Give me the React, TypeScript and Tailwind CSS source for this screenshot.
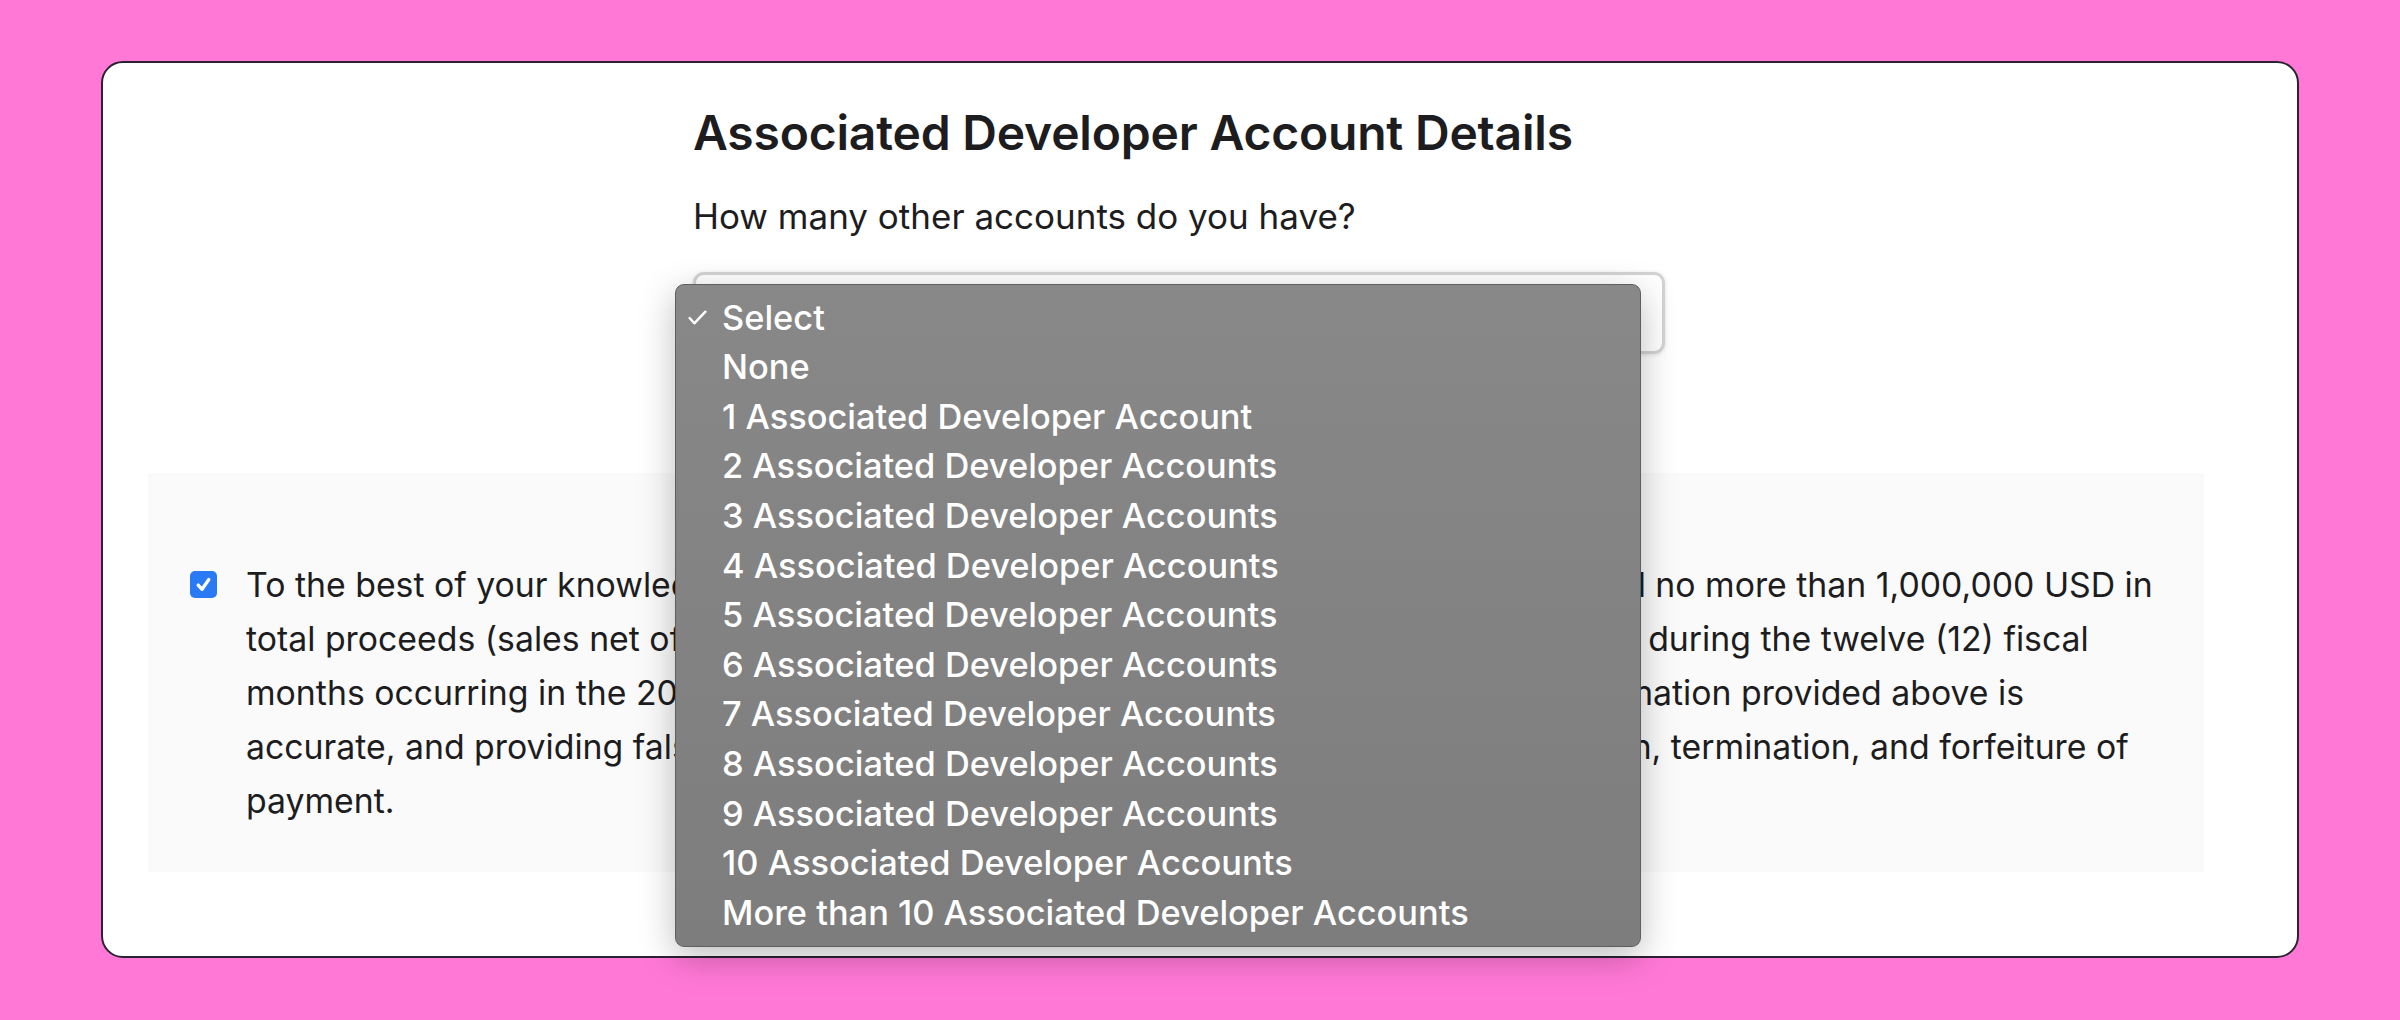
import React from 'react';

const options = [
  'Select',
  'None',
  '1 Associated Developer Account',
  '2 Associated Developer Accounts',
  '3 Associated Developer Accounts',
  '4 Associated Developer Accounts',
  '5 Associated Developer Accounts',
  '6 Associated Developer Accounts',
  '7 Associated Developer Accounts',
  '8 Associated Developer Accounts',
  '9 Associated Developer Accounts',
  '10 Associated Developer Accounts',
  'More than 10 Associated Developer Accounts',
];

// Native-looking popup list shown over the closed select
const OptionMenu: React.FC<{ selected: number }> = ({ selected }) => (
  <div className="absolute left-[-21px] top-[9px] z-10 w-[966px] rounded-[9px] border border-[#5f5f5f] bg-gradient-to-b from-[#888888] to-[#7d7d7d] py-[8px] shadow-[0_10px_36px_rgba(0,0,0,0.26)]">
    {options.map((label, i) => (
      <div key={label} className="flex h-[49.6px] items-center text-[34.4px] font-medium leading-none text-white">
        <span className="flex w-[46px] items-center pl-[12px]">
          {i === selected && (
            <svg viewBox="0 0 18 14" className="h-[15px] w-[19px]" fill="none" stroke="white" strokeWidth="2.3" strokeLinecap="round" strokeLinejoin="round">
              <path d="M1.5 7.5 L6 12.5 L16.5 1.5" />
            </svg>
          )}
        </span>
        <span>{label}</span>
      </div>
    ))}
  </div>
);

const App: React.FC = () => {
  return (
    <div className="min-h-screen bg-[#ff78d6] px-[101px] pt-[61px] font-['Inter',sans-serif] text-[#1d1d1f]">
      <div className="h-[897px] rounded-[22px] border-2 border-[#2a2233] bg-white">
        <div className="ml-[590px] pt-[42px]">
          <h2 className="text-[48px] font-semibold leading-[56px] tracking-[-0.2px]">Associated Developer Account Details</h2>
          <p className="mt-[33px] text-[35px] leading-[44px]">How many other accounts do you have?</p>

          <div className="relative mt-[34px] h-[82px] w-[972px] rounded-[11px] border-[3px] border-[#d3d3d3] bg-white shadow-[0_1px_4px_rgba(0,0,0,0.12)]">
            <OptionMenu selected={0} />
          </div>
        </div>

        <div className="ml-[45px] mr-[93px] mt-[119px] flex gap-[29px] bg-[#fafafa] pl-[42px] pr-[40px] pb-[44px] pt-[85px]">
          <div className="mt-[13px] flex h-[27px] w-[27px] shrink-0 items-center justify-center rounded-[5px] bg-[#2a7af5]">
            <svg viewBox="0 0 16 16" className="h-[19px] w-[19px]" fill="none" stroke="white" strokeWidth="2.8" strokeLinecap="round" strokeLinejoin="round">
              <path d="M3.5 8.5 L6.8 12 L12.5 3.8" />
            </svg>
          </div>
          <p className="whitespace-nowrap text-[33.8px] leading-[54px] text-[#1d1d1f]">
            To the best of your knowledge, you and all your Associated Developer Accounts earned no more than 1,000,000 USD in
            <br />
            total proceeds (sales net of Apple's commission and taxes) across all of your paid apps during the twelve (12) fiscal
            <br />
            months occurring in the 2022 calendar year. You also hereby affirm that all of the information provided above is
            <br />
            accurate, and providing false or inaccurate information can also result in the suspension, termination, and forfeiture of
            <br />
            payment.
          </p>
        </div>
      </div>
    </div>
  );
};

export default App;
